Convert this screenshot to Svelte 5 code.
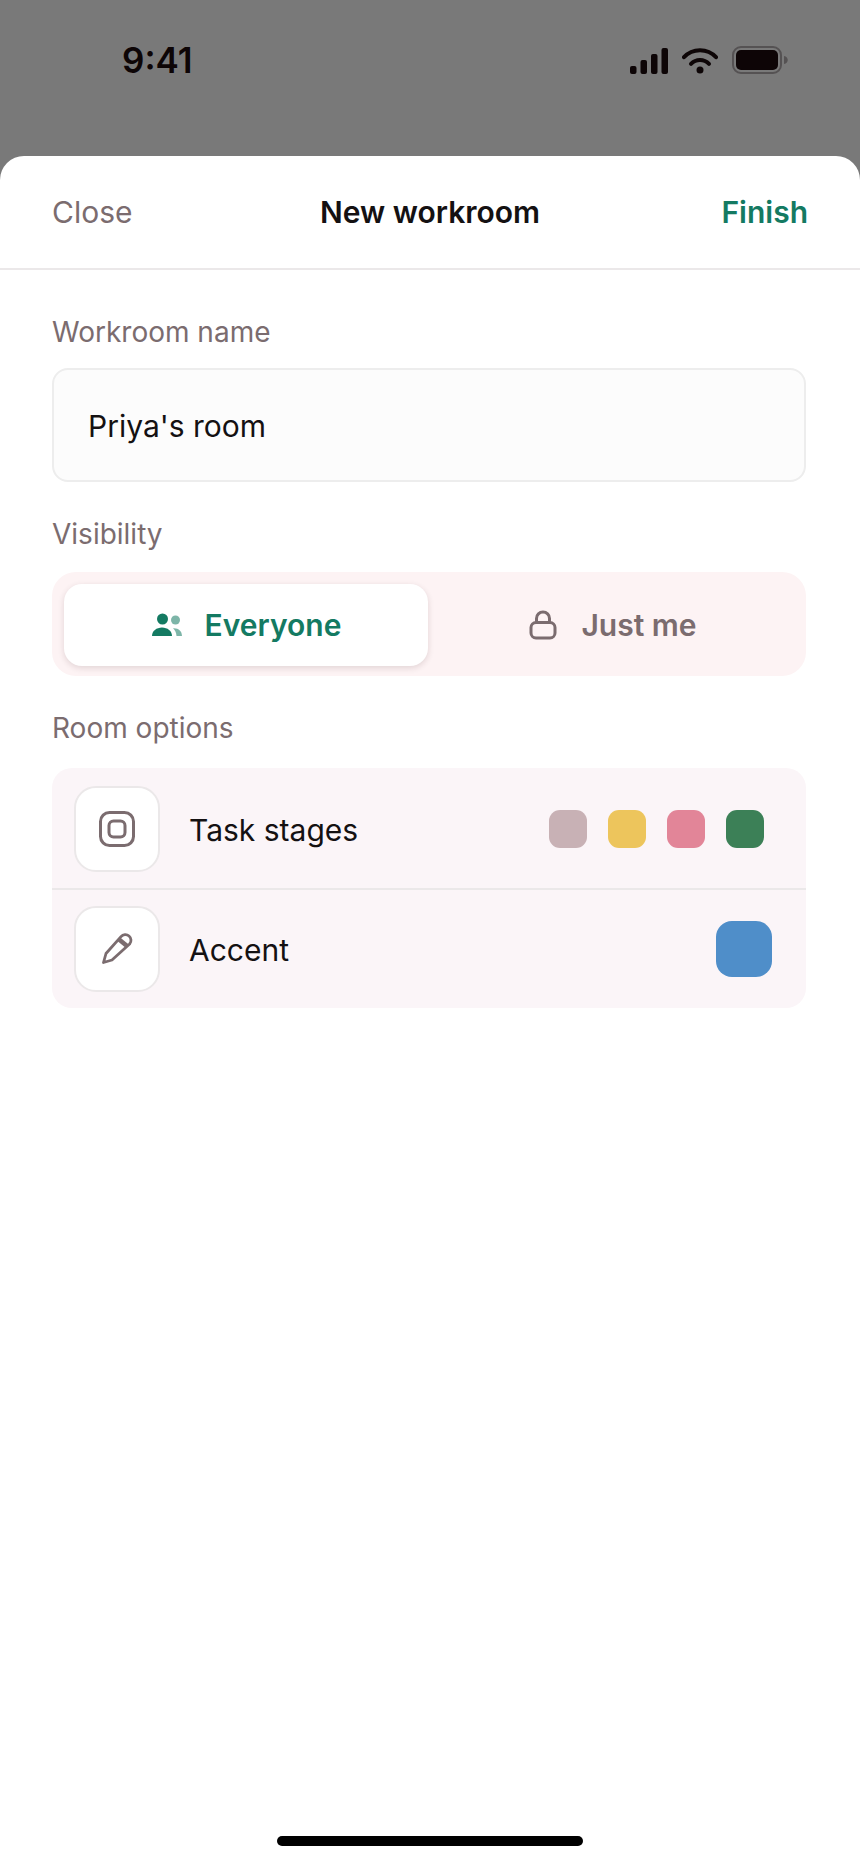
<script lang="ts">
  type Visibility = 'everyone' | 'me';

  const stages = [
    { name: 'Backlog', color: '#c8b1b5' },
    { name: 'In progress', color: '#edc55c' },
    { name: 'Review', color: '#e28598' },
    { name: 'Done', color: '#3c8057' },
  ];

  let name = $state("Priya's room");
  let visibility = $state<Visibility>('everyone');
  let accent = $state('#4f8ec9');

  function handleSubmit(event: SubmitEvent) {
    event.preventDefault();
  }
</script>

<div class="screen">
  <div class="status">
    <span class="status__time">9:41</span>
    <div class="status__icons" aria-hidden="true">
      <svg width="38" height="28" viewBox="0 0 38 28" fill="currentColor">
        <rect x="0" y="20" width="6.5" height="8" rx="2" />
        <rect x="10.5" y="14" width="6.5" height="14" rx="2" />
        <rect x="21" y="8" width="6.5" height="20" rx="2" />
        <rect x="31.5" y="2" width="6.5" height="26" rx="2" />
      </svg>
      <svg width="36" height="28" viewBox="0 0 36 28" fill="none" stroke="currentColor" stroke-width="4" stroke-linecap="round">
        <path d="M2 11.2C10.5 1.8 25.5 1.8 34 11.2" />
        <path d="M9 17.8C14 12.6 22 12.6 27 17.8" />
        <circle cx="18" cy="24" r="3.5" fill="currentColor" stroke="none" />
      </svg>
      <svg width="56" height="28" viewBox="0 0 56 28">
        <rect x="1" y="1" width="48" height="26" rx="8" fill="none" stroke="#555253" stroke-width="2" />
        <rect x="4" y="4" width="42" height="20" rx="5" fill="currentColor" />
        <path d="M52 10c5 1 5 7 0 8z" fill="#555253" />
      </svg>
    </div>
  </div>

  <form class="sheet" onsubmit={handleSubmit}>
    <header class="sheet__header">
      <button type="button" class="sheet__close">Close</button>
      <h1 class="sheet__title">New workroom</h1>
      <button type="submit" class="sheet__finish">Finish</button>
    </header>

    <div class="sheet__body">
      <label class="label" for="room-name">Workroom name</label>
      <input id="room-name" class="field" type="text" bind:value={name} />

      <fieldset class="group">
        <legend class="label">Visibility</legend>
        <div class="segments">
          <label class="segment" class:segment--active={visibility === 'everyone'}>
            <input type="radio" name="visibility" value="everyone" bind:group={visibility} />
            <svg width="32" height="32" viewBox="0 0 32 32" fill="currentColor" aria-hidden="true">
              <circle cx="11.5" cy="10" r="5.5" />
              <path d="M1 27C1 22 5.5 18.5 11 18.5S21 22 21 27z" />
              <g opacity="0.55">
                <circle cx="24.5" cy="11" r="4.5" />
                <path d="M22 19.2C27.5 18.8 31 22 31 27H25.5C25.3 23.5 24 21 22 19.2z" />
              </g>
            </svg>
            <span>Everyone</span>
          </label>
          <label class="segment" class:segment--active={visibility === 'me'}>
            <input type="radio" name="visibility" value="me" bind:group={visibility} />
            <svg width="32" height="32" viewBox="0 0 32 32" fill="none" stroke="currentColor" stroke-width="3" aria-hidden="true">
              <rect x="4" y="13.5" width="24" height="15.5" rx="5" />
              <path d="M9.5 13.5V9.5a6.5 6.5 0 0 1 13 0V13.5" />
            </svg>
            <span>Just me</span>
          </label>
        </div>
      </fieldset>

      <section class="group">
        <h2 class="label">Room options</h2>
        <div class="options">
          <button type="button" class="option">
            <span class="option__tile">
              <svg width="40" height="40" viewBox="0 0 40 40" fill="none" stroke="currentColor" stroke-width="3" aria-hidden="true">
                <rect x="3.5" y="3.5" width="33" height="33" rx="9" />
                <rect x="12" y="12" width="16" height="16" rx="4.5" />
              </svg>
            </span>
            <span class="option__name">Task stages</span>
            <span class="option__stages">
              {#each stages as stage (stage.name)}
                <span class="stage" style="background: {stage.color}"></span>
              {/each}
            </span>
          </button>
          <button type="button" class="option">
            <span class="option__tile">
              <svg width="40" height="40" viewBox="0 0 40 40" fill="none" stroke="currentColor" stroke-width="2.8" stroke-linejoin="round" aria-hidden="true">
                <path d="M6.5 33.5L9 24.5L24 7.6A5.6 5.6 0 0 1 32.6 15L15 31z" />
                <path d="M21.5 10L30 17" stroke-width="4.5" />
              </svg>
            </span>
            <span class="option__name">Accent</span>
            <span class="option__accent" style="background: {accent}"></span>
          </button>
        </div>
      </section>
    </div>

    <div class="home-bar"></div>
  </form>
</div>

<style>
  :global(body) {
    margin: 0;
    background: #797979;
  }

  .screen {
    --ink: #141112;
    --ink-soft: #7b6c6f;
    --green: #147a62;
    --rule: #ebe8e9;
    display: flex;
    flex-direction: column;
    min-height: 100vh;
    font-family: Inter, "Liberation Sans", sans-serif;
    font-size: 30px;
    line-height: 40px;
    color: var(--ink);
  }

  button,
  input {
    font: inherit;
    color: inherit;
  }

  button {
    padding: 0;
    border: none;
    background: none;
    cursor: pointer;
  }

  .status {
    display: flex;
    align-items: center;
    justify-content: space-between;
    height: 120px;
    margin-bottom: 36px;
    padding: 0 72px 0 122px;
    color: #0d0506;
  }

  .status__time {
    font-size: 35px;
    font-weight: 600;
  }

  .status__icons {
    display: flex;
    gap: 14px;
  }

  .sheet {
    flex: 1;
    display: flex;
    flex-direction: column;
    background: #fff;
    border-radius: 24px 24px 0 0;
  }

  .sheet__header {
    display: grid;
    grid-template-columns: 1fr auto 1fr;
    align-items: center;
    height: 112px;
    padding: 0 52px;
    border-bottom: 2px solid var(--rule);
  }

  .sheet__close {
    justify-self: start;
    color: var(--ink-soft);
  }

  .sheet__title {
    margin: 0;
    font-size: inherit;
    font-weight: 600;
  }

  .sheet__finish {
    justify-self: end;
    font-weight: 600;
    color: var(--green);
  }

  .sheet__body {
    flex: 1;
    display: flex;
    flex-direction: column;
    padding: 42px 54px 0 52px;
  }

  .label {
    margin: 0 0 16px;
    padding: 0;
    font-size: 28px;
    font-weight: 400;
    color: var(--ink-soft);
  }

  .field {
    box-sizing: border-box;
    width: 100%;
    height: 114px;
    padding: 2px 34px 0;
    border: 2px solid #ededed;
    border-radius: 16px;
    background: #fcfcfc;
  }

  .group {
    min-width: 0;
    margin: 32px 0 0;
    padding: 0;
    border: none;
  }

  .group .label {
    margin-bottom: 18px;
  }

  .segments {
    display: grid;
    grid-template-columns: 1fr 1fr;
    gap: 2px;
    padding: 12px 12px 10px;
    border-radius: 24px;
    background: #fdf3f4;
  }

  .segment {
    position: relative;
    display: flex;
    align-items: center;
    justify-content: center;
    gap: 22px;
    height: 82px;
    border-radius: 18px;
    font-weight: 600;
    color: var(--ink-soft);
    cursor: pointer;
  }

  .segment--active {
    background: #fff;
    box-shadow: 0 2px 6px rgb(60 20 30 / 14%);
    color: var(--green);
  }

  .segment input {
    position: absolute;
    inset: 0;
    margin: 0;
    opacity: 0;
    cursor: pointer;
  }

  .options {
    margin-top: 20px;
    padding-top: 2px;
    border-radius: 20px;
    background: #fbf5f8;
  }

  .option {
    display: flex;
    align-items: center;
    width: 100%;
    padding: 16px 34px 16px 22px;
    text-align: left;
  }

  .option + .option {
    border-top: 2px solid var(--rule);
  }

  .option__tile {
    box-sizing: border-box;
    display: grid;
    place-items: center;
    width: 86px;
    height: 86px;
    border: 2px solid var(--rule);
    border-radius: 22px;
    background: #fff;
    color: var(--ink-soft);
  }

  .option__name {
    flex: 1;
    margin-left: 29px;
    padding-top: 2px;
  }

  .option__stages {
    display: flex;
    gap: 21px;
    margin-right: 8px;
  }

  .stage {
    width: 38px;
    height: 38px;
    border-radius: 11px;
  }

  .option__accent {
    width: 56px;
    height: 56px;
    border-radius: 16px;
  }

  .home-bar {
    align-self: center;
    width: 306px;
    height: 10px;
    margin-bottom: 18px;
    border-radius: 5px;
    background: #000;
  }
</style>
